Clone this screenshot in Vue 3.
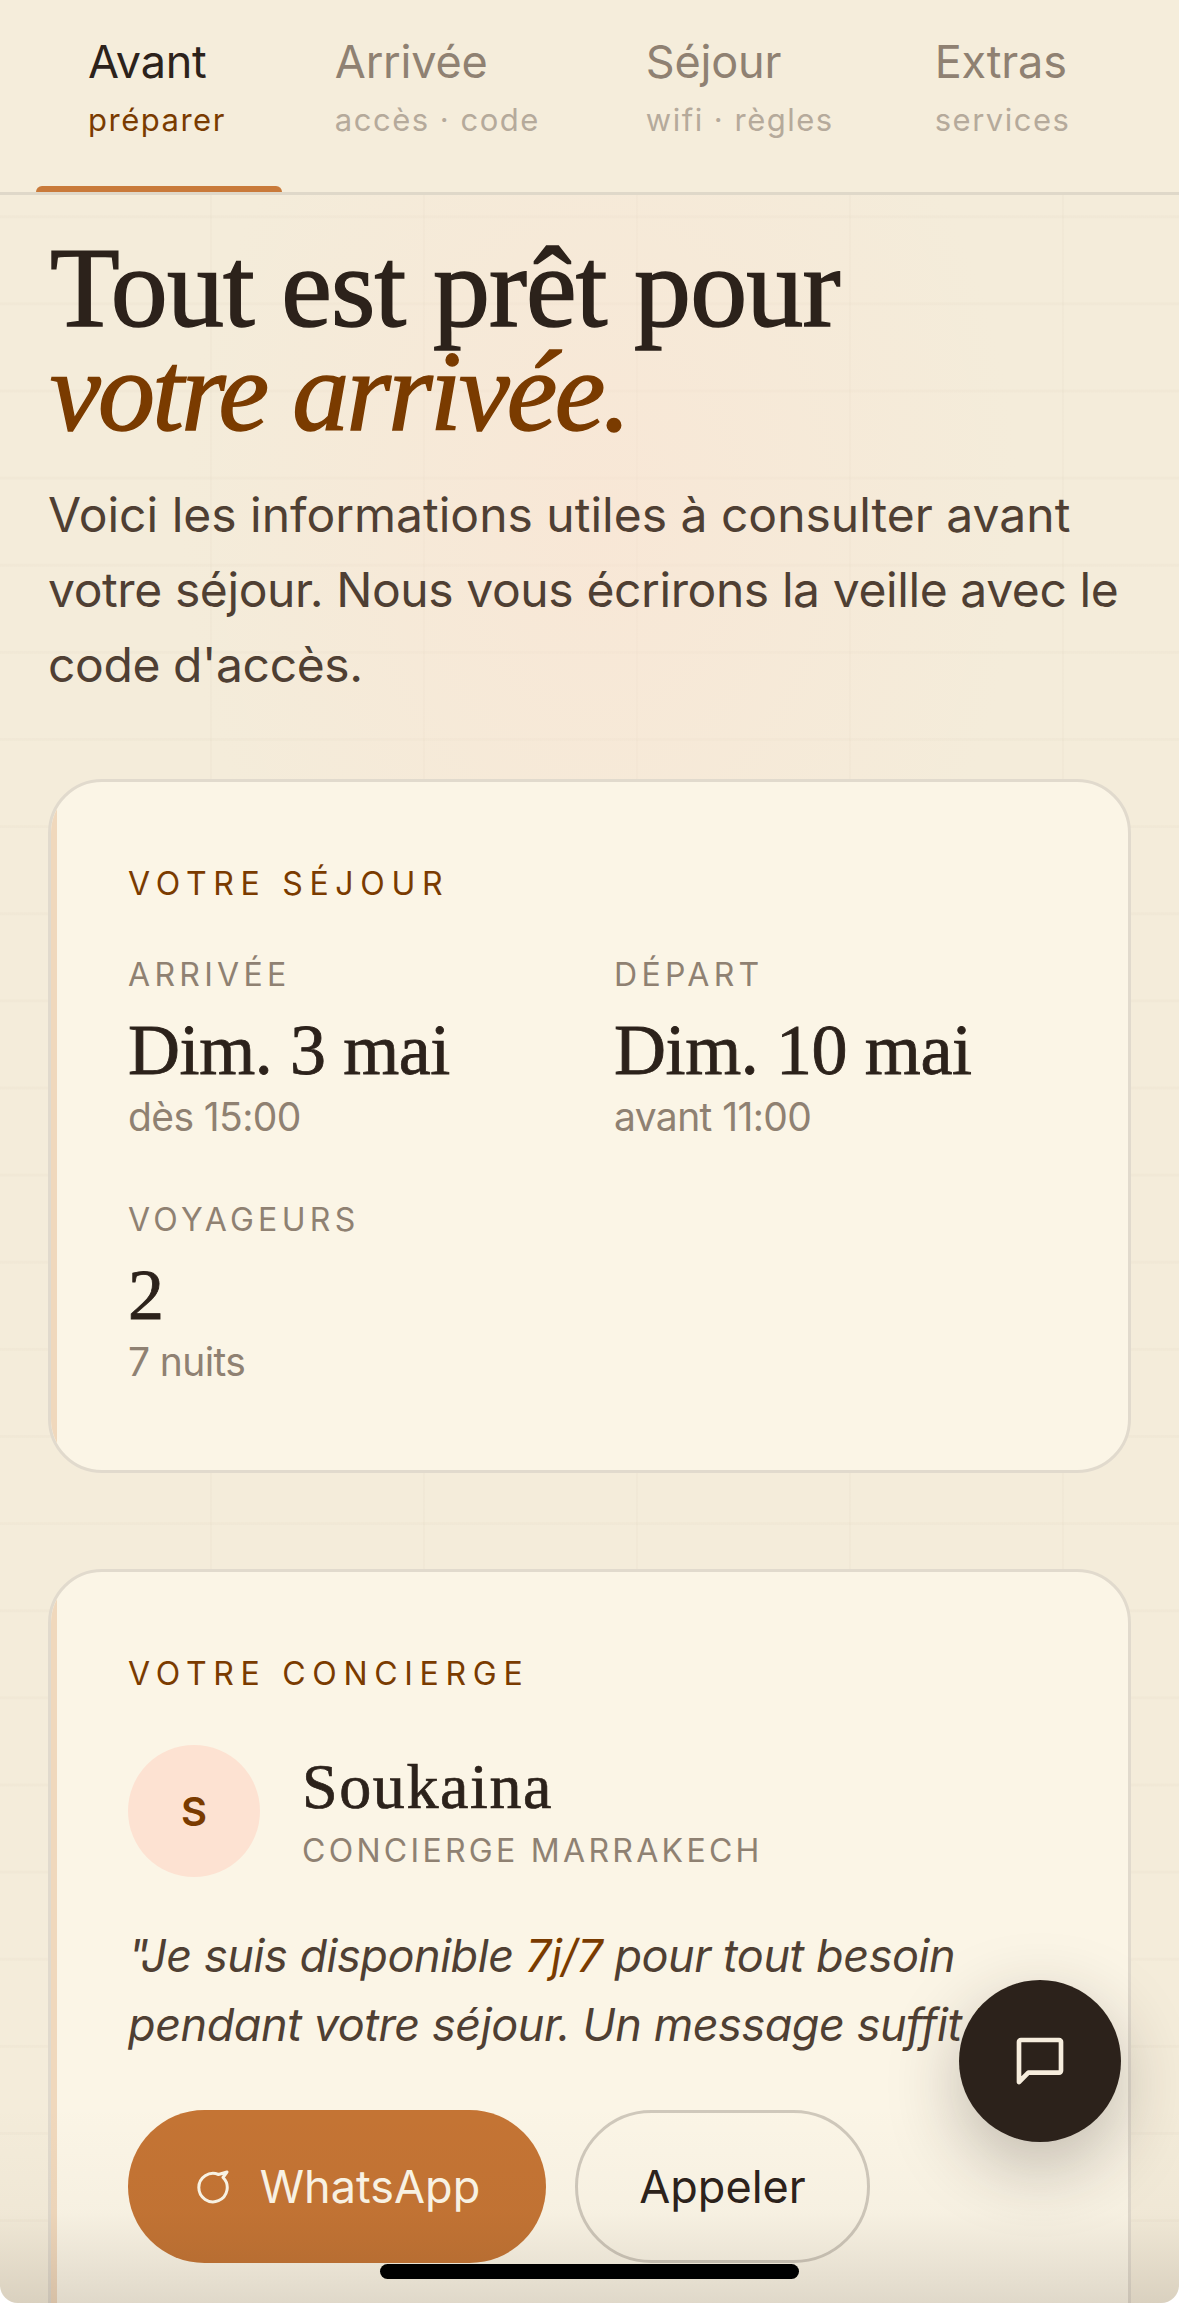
<template>
  <div class="screen">
    <nav class="tabs">
      <div v-for="tab in tabs" :key="tab.label" class="tab" :class="{ active: tab.active }">
        <span class="tab-label">{{ tab.label }}</span>
        <span class="tab-sub">{{ tab.sub }}</span>
      </div>
    </nav>

    <main class="content">
      <h1 class="title">Tout est prêt pour<br /><em>votre arrivée.</em></h1>
      <p class="intro">
        <span class="intro-first">Voici les informations utiles à consulter avant</span><br />
        votre séjour. Nous vous écrirons la veille avec le<br />
        code d'accès.
      </p>

      <section class="card stay">
        <h2 class="eyebrow">VOTRE SÉJOUR</h2>
        <div class="stay-grid">
          <div v-for="item in stay" :key="item.label" class="stay-item">
            <div class="stay-label">{{ item.label }}</div>
            <div class="stay-value">{{ item.value }}</div>
            <div class="stay-note">{{ item.note }}</div>
          </div>
        </div>
      </section>

      <section class="card concierge">
        <h2 class="eyebrow">VOTRE CONCIERGE</h2>
        <div class="person">
          <div class="avatar">S</div>
          <div>
            <div class="person-name">Soukaina</div>
            <div class="person-role">CONCIERGE MARRAKECH</div>
          </div>
        </div>
        <p class="quote">
          "Je suis disponible <span class="accent">7j/7</span> pour tout besoin<br />
          pendant votre séjour. Un message suffit."
        </p>
        <div class="actions">
          <button class="btn primary">
            <svg class="wa-icon" width="36" height="36" viewBox="0 0 36 36" fill="none">
              <path
                d="M29 8.5A14.2 14.2 0 1 1 24.5 5.5L33 3Z"
                stroke="currentColor"
                stroke-width="3"
                stroke-linejoin="round"
              />
            </svg>
            WhatsApp
          </button>
          <button class="btn ghost">Appeler</button>
        </div>
      </section>
    </main>

    <div class="bottom-fade"></div>

    <button class="fab" aria-label="Messages">
      <svg width="56" height="56" viewBox="0 0 24 24" fill="none">
        <path
          d="M21 16.2a.8.8 0 0 1-.8.8H7l-4 4V3.8a.8.8 0 0 1 .8-.8h16.4a.8.8 0 0 1 .8.8z"
          stroke="currentColor"
          stroke-width="2"
          stroke-linejoin="round"
        />
      </svg>
    </button>

    <div class="home-bar"></div>
  </div>
</template>

<script setup>
const tabs = [
  { label: "Avant", sub: "préparer", active: true },
  { label: "Arrivée", sub: "accès · code" },
  { label: "Séjour", sub: "wifi · règles" },
  { label: "Extras", sub: "services" },
];

const stay = [
  { label: "ARRIVÉE", value: "Dim. 3 mai", note: "dès 15:00" },
  { label: "DÉPART", value: "Dim. 10 mai", note: "avant 11:00" },
  { label: "VOYAGEURS", value: "2", note: "7 nuits" },
];
</script>

<style>
html,
body {
  background: #fff;
}
</style>

<style scoped>
.screen {
  position: relative;
  width: 1179px;
  height: 2303px;
  overflow: hidden;
  border-radius: 0 0 18px 18px;
  font-family: "Inter", "Liberation Sans", sans-serif;
  color: #2c221b;
  background-color: #f4ecda;
  background-image:
    radial-gradient(ellipse 420px 560px at 600px 520px, rgba(252, 226, 210, 0.5), rgba(252, 226, 210, 0)),
    linear-gradient(rgba(120, 90, 50, 0.022) 3px, transparent 3px),
    linear-gradient(90deg, rgba(120, 90, 50, 0.022) 2px, transparent 2px);
  background-size:
    100% 100%,
    213px 87.14px,
    213px 87.14px;
  background-position:
    0 0,
    0 41px,
    210px 0;
}

.tabs {
  display: flex;
  height: 195px;
  padding-left: 35px;
  border-bottom: 3px solid #dfd8c9;
  box-sizing: border-box;
  background: #f5eddb;
}

.tab {
  position: relative;
  display: flex;
  flex-direction: column;
  padding: 37px 53px 0;
}

.tab.active {
  padding-right: 56px;
}

.tab:nth-child(3) {
  padding-right: 48px;
}

.tab.active::after {
  content: "";
  position: absolute;
  left: 1px;
  right: 0;
  bottom: 0;
  height: 6px;
  border-radius: 6px 6px 0 0;
  background: #c97a3a;
}

.tab-label {
  font-size: 45px;
  line-height: 50px;
  letter-spacing: -0.2px;
  color: #8f8172;
}

.tab-sub {
  margin-top: 14px;
  font-size: 31px;
  line-height: 38px;
  letter-spacing: 1.5px;
  color: #b5aa9b;
}

.active .tab-label {
  color: #2c221b;
}

.active .tab-sub {
  color: #7a3b00;
}

.content {
  padding: 0 48px;
}

.title {
  margin: 41px 0 0 2px;
  font-family: "Liberation Serif", serif;
  font-weight: 400;
  font-size: 114px;
  line-height: 104px;
  letter-spacing: -0.9px;
  -webkit-text-stroke: 1.5px currentColor;
}

.title em {
  color: #7a3b00;
  font-style: italic;
  letter-spacing: -2.7px;
}

.intro {
  margin: 33px 0 0;
  font-size: 48px;
  line-height: 75px;
  letter-spacing: -0.4px;
  color: #4f3f33;
  white-space: nowrap;
}

.intro-first {
  letter-spacing: 0;
}

.card {
  position: relative;
  overflow: hidden;
  box-sizing: border-box;
  border: 3px solid #e1dacd;
  border-radius: 54px;
  background: #fbf5e6;
  padding: 0 77px;
}

.card::before {
  content: "";
  position: absolute;
  left: 0;
  top: 0;
  bottom: 0;
  width: 6px;
  background: #f0d8bc;
}

.stay {
  height: 694px;
  margin-top: 77px;
}

.concierge {
  height: 900px;
  margin-top: 96px;
}

.eyebrow {
  margin: 0;
  padding-top: 83px;
  font-size: 32px;
  font-weight: 400;
  line-height: 38px;
  letter-spacing: 6.7px;
  color: #7a3b00;
}

.stay-grid {
  display: grid;
  grid-template-columns: 438px 438px;
  column-gap: 48px;
  row-gap: 62px;
  margin-top: 54px;
}

.stay-label {
  font-size: 32px;
  line-height: 36px;
  letter-spacing: 4.3px;
  color: #8f8172;
}

.stay-value {
  margin-top: 19px;
  font-family: "Liberation Serif", serif;
  font-size: 72px;
  line-height: 76px;
  letter-spacing: -0.4px;
  -webkit-text-stroke: 0.8px currentColor;
}

.stay-note {
  margin-top: 6px;
  font-size: 39px;
  line-height: 46px;
  letter-spacing: -0.6px;
  color: #8f8172;
}

.person {
  display: flex;
  align-items: center;
  gap: 42px;
  margin-top: 52px;
}

.avatar {
  display: flex;
  align-items: center;
  justify-content: center;
  width: 132px;
  height: 132px;
  border-radius: 50%;
  background: #fde2d2;
  color: #7a3b00;
  font-size: 40px;
  font-weight: 600;
}

.person-name {
  font-family: "Liberation Serif", serif;
  font-size: 64px;
  line-height: 70px;
  letter-spacing: 1.6px;
  -webkit-text-stroke: 0.7px currentColor;
}

.person-role {
  margin-top: 10px;
  font-size: 32px;
  line-height: 38px;
  letter-spacing: 3.3px;
  color: #8f8172;
}

.quote {
  margin: 44px 0 0;
  font-size: 45px;
  font-style: italic;
  line-height: 69px;
  letter-spacing: -0.45px;
  color: #4f3f33;
  white-space: nowrap;
}

.accent {
  color: #7a3b00;
}

.actions {
  display: flex;
  gap: 29px;
  margin-top: 51px;
}

.btn {
  display: flex;
  align-items: center;
  justify-content: center;
  box-sizing: border-box;
  height: 153px;
  border-radius: 77px;
  font-family: inherit;
  font-size: 45px;
  letter-spacing: 0;
}

.primary {
  width: 418px;
  gap: 30px;
  border: 0;
  background: #c47434;
  color: #fbf5e6;
}

.ghost {
  width: 295px;
  border: 3px solid #cfc8bb;
  background: transparent;
  color: #2c221b;
}

.bottom-fade {
  position: absolute;
  left: 0;
  right: 0;
  bottom: 0;
  height: 200px;
  background: linear-gradient(
    rgba(60, 45, 30, 0),
    rgba(60, 45, 30, 0.025) 55%,
    rgba(60, 45, 30, 0.14)
  );
}

.fab {
  position: absolute;
  left: 959px;
  top: 1980px;
  display: flex;
  align-items: center;
  justify-content: center;
  width: 162px;
  height: 162px;
  padding: 0;
  border: 0;
  border-radius: 50%;
  background: #2c221b;
  color: #f6eddd;
  box-shadow: 0 24px 72px rgba(44, 34, 27, 0.28);
}

.home-bar {
  position: absolute;
  left: 380px;
  top: 2264px;
  width: 419px;
  height: 15px;
  border-radius: 8px;
  background: #000;
}
</style>
